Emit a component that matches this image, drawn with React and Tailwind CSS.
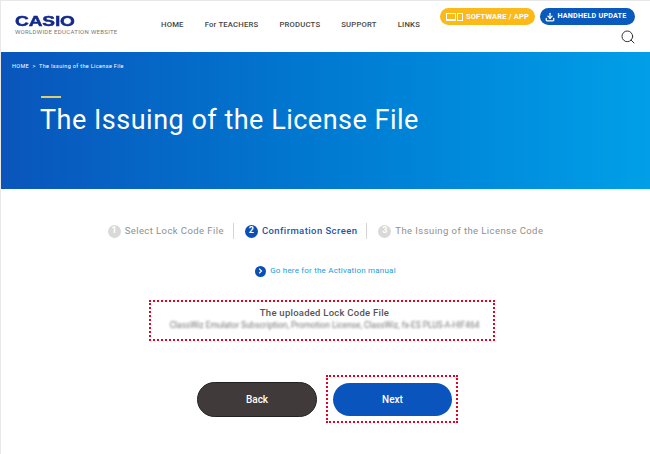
import React from "react";
import { Download, Search } from "lucide-react";

const NAV = ["HOME", "For TEACHERS", "PRODUCTS", "SUPPORT", "LINKS"];

function Step({ n, label, active }) {
  return (
    <div className="flex items-center gap-[4px]">
      <span
        className={`flex h-[13px] w-[13px] items-center justify-center rounded-full text-[9px] font-bold text-white ${
          active ? "bg-[#0a4fb3]" : "bg-[#d9d9d9]"
        }`}
      >
        {n}
      </span>
      <span
        className={`text-[9.5px] tracking-[0.42px] ${
          active ? "font-medium text-[#1d55a8]" : "font-normal text-[#8f8f8f]"
        }`}
      >
        {label}
      </span>
    </div>
  );
}

export default function App() {
  return (
    <div className="h-[454px] w-[650px] overflow-hidden border-l border-t border-[#e8e8e8] bg-white font-['Roboto',sans-serif]">
      {/* header */}
      <header className="flex h-[51px] items-start">
        <div className="ml-[14px] mt-[12px] w-[146px]">
          <div className="origin-left scale-x-[1.23] font-['Liberation_Sans',sans-serif] text-[15.5px] font-bold leading-[15px] tracking-[-0.1px] text-[#122a88] [-webkit-text-stroke:0.5px_#122a88]">
            CASIO
          </div>
          <div className="text-[6px] leading-[7px] tracking-[0.3px] whitespace-nowrap text-[#777777]">
            WORLDWIDE EDUCATION WEBSITE
          </div>
        </div>
        <nav className="mt-[18px] flex gap-[21px] text-[7.7px] font-medium leading-[12px] tracking-[0.2px] whitespace-nowrap text-[#444444]">
          {NAV.map((item) => (
            <span key={item}>{item}</span>
          ))}
        </nav>
        <div className="ml-auto mr-[15px] mt-[7px] flex flex-col items-end">
          <div className="flex gap-[5px]">
            <div className="flex h-[17px] w-[95px] items-center justify-center gap-[3px] rounded-full bg-[#fbb91a] text-[7.5px] font-bold tracking-[0.2px] text-white">
              <svg width="17" height="8" viewBox="0 0 17 8" fill="none" stroke="white">
                <rect x="0.5" y="0.5" width="9" height="6" />
                <path d="M0 7.5h10" />
                <rect x="11.5" y="0.5" width="5" height="7" />
              </svg>
              SOFTWARE / APP
            </div>
            <div className="flex h-[17px] w-[95px] items-center justify-center gap-[2px] rounded-full bg-[#0a59bd] pr-[3px] text-[7.2px] font-bold tracking-[0.2px] text-white">
              <Download size={10} strokeWidth={3} />
              HANDHELD UPDATE
            </div>
          </div>
          <Search size={16} strokeWidth={1.5} className="mr-[-1px] mt-[4px] text-[#333333]" />
        </div>
      </header>

      {/* hero */}
      <section className="h-[137px] bg-gradient-to-r from-[#0a55bb] to-[#019fe8] pl-[11px] pt-[10px] text-white">
        <div className="text-[5.5px] leading-[8px] tracking-[0.35px]">
          HOME &nbsp;&gt;&nbsp; The Issuing of the License File
        </div>
        <div className="ml-[29px] mt-[26px] h-[2px] w-[20px] bg-[#d8d070]" />
        <h1 className="ml-[28px] mt-[4px] text-[27px] font-normal leading-[36px] tracking-[0.5px]">
          The Issuing of the License File
        </h1>
      </section>

      {/* steps */}
      <div className="mt-[34px] flex items-center justify-center">
        <Step n="1" label="Select Lock Code File" />
        <div className="ml-[9px] mr-[11px] h-[16px] w-px bg-[#d5d5d5]" />
        <Step n="2" label="Confirmation Screen" active />
        <div className="ml-[9px] mr-[11px] h-[16px] w-px bg-[#d5d5d5]" />
        <Step n="3" label="The Issuing of the License Code" />
      </div>

      <div className="mt-[26px] flex items-center justify-center gap-[4px]">
        <span className="flex h-[11px] w-[11px] items-center justify-center rounded-full bg-[#0a4fb3]">
          <svg width="5" height="6" viewBox="0 0 5 6" fill="none" stroke="white" strokeWidth="1.2">
            <path d="M1.2 0.8L3.5 3L1.2 5.2" />
          </svg>
        </span>
        <span className="text-[8px] leading-[12px] tracking-[0.2px] text-[#1a9be0]">
          Go here for the Activation manual
        </span>
      </div>

      {/* uploaded file */}
      <div className="ml-[148px] mt-[23px] flex h-[41px] w-[346px] flex-col items-center border-2 border-dotted border-[#e4001f] pl-[5px] pt-[4px]">
        <div className="text-[9.5px] font-medium leading-[14px] tracking-[0.25px] text-[#555555]">
          The uploaded Lock Code File
        </div>
        <div className="mt-[-1px] text-[8.3px] leading-[12px] whitespace-nowrap text-[#777777] blur-[1.2px]">
          ClassWiz Emulator Subscription, Promotion License, ClassWiz, fx-ES PLUS-A-HIF464
        </div>
      </div>

      {/* buttons */}
      <div className="mt-[34px] flex items-center">
        <button className="ml-[196px] flex h-[35px] w-[120px] items-center justify-center rounded-full border border-[#222222] bg-[#403b3a] text-[10px] font-medium text-white">
          Back
        </button>
        <div className="ml-[9px] flex h-[48px] w-[132px] items-center justify-center border-2 border-dotted border-[#e4001f] pl-px">
          <button className="flex h-[33px] w-[119px] items-center justify-center rounded-full bg-[#0a55bd] text-[10px] font-medium text-white">
            Next
          </button>
        </div>
      </div>
    </div>
  );
}
